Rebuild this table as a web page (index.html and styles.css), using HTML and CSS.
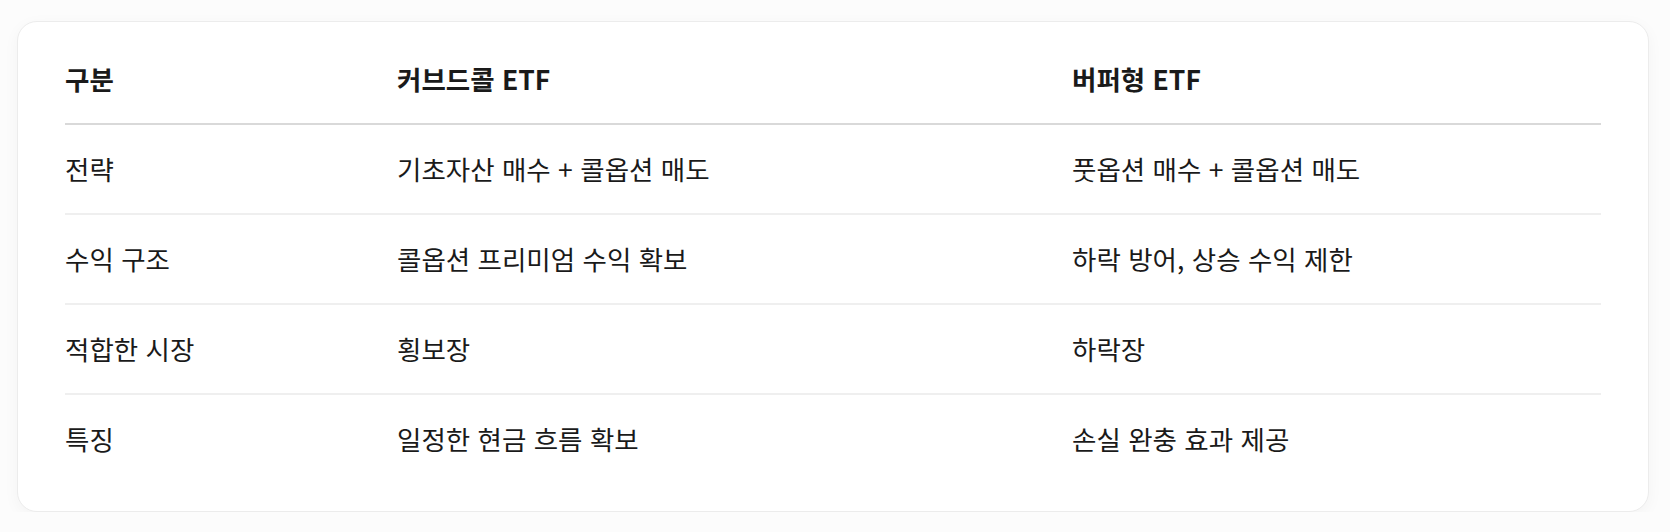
FILE: index.html
```html
<!DOCTYPE html>
<html lang="ko">
<head>
<meta charset="utf-8">
<link rel="stylesheet" href="styles.css">
</head>
<body>
<div class="card">
  <table class="cmp">
    <colgroup>
      <col class="c1"><col class="c2"><col class="c3">
    </colgroup>
    <thead>
      <tr><th>구분</th><th>커브드콜 ETF</th><th>버퍼형 ETF</th></tr>
    </thead>
    <tbody>
      <tr><td>전략</td><td>기초자산 매수 + 콜옵션 매도</td><td>풋옵션 매수 + 콜옵션 매도</td></tr>
      <tr><td>수익 구조</td><td>콜옵션 프리미엄 수익 확보</td><td>하락 방어, 상승 수익 제한</td></tr>
      <tr><td>적합한 시장</td><td>횡보장</td><td>하락장</td></tr>
      <tr><td>특징</td><td>일정한 현금 흐름 확보</td><td>손실 완충 효과 제공</td></tr>
    </tbody>
  </table>
</div>
</body>
</html>
```
FILE: styles.css
```css
html, body {
  margin: 0;
  padding: 0;
  background: #fcfcfc;
}
body {
  padding: 21px 21px 0 17px;
  font-family: "Noto Sans CJK KR", "Noto Sans", sans-serif;
  color: #1a1a1a;
}
.card {
  background: #fff;
  border: 1px solid #ececec;
  border-radius: 20px;
  box-shadow: 0 4px 16px rgba(0, 0, 0, 0.04);
  padding: 12px 47px 26px 47px;
  height: 451px;
}
.cmp {
  width: 1536px;
  border-collapse: collapse;
  table-layout: fixed;
}
.c1 { width: 332px; }
.c2 { width: 675px; }
.c3 { width: 529px; }
.cmp th, .cmp td {
  padding: 0;
  text-align: left;
  font-size: 26.5px;
  line-height: 26px;
  vertical-align: middle;
}
.cmp th {
  height: 89px;
  font-weight: 700;
  border-bottom: 2px solid #d9d9d9;
}
.cmp td {
  height: 88px;
  font-weight: 400;
  border-bottom: 2px solid #efefef;
}
.cmp tbody tr:last-child td {
  border-bottom: none;
}
```
